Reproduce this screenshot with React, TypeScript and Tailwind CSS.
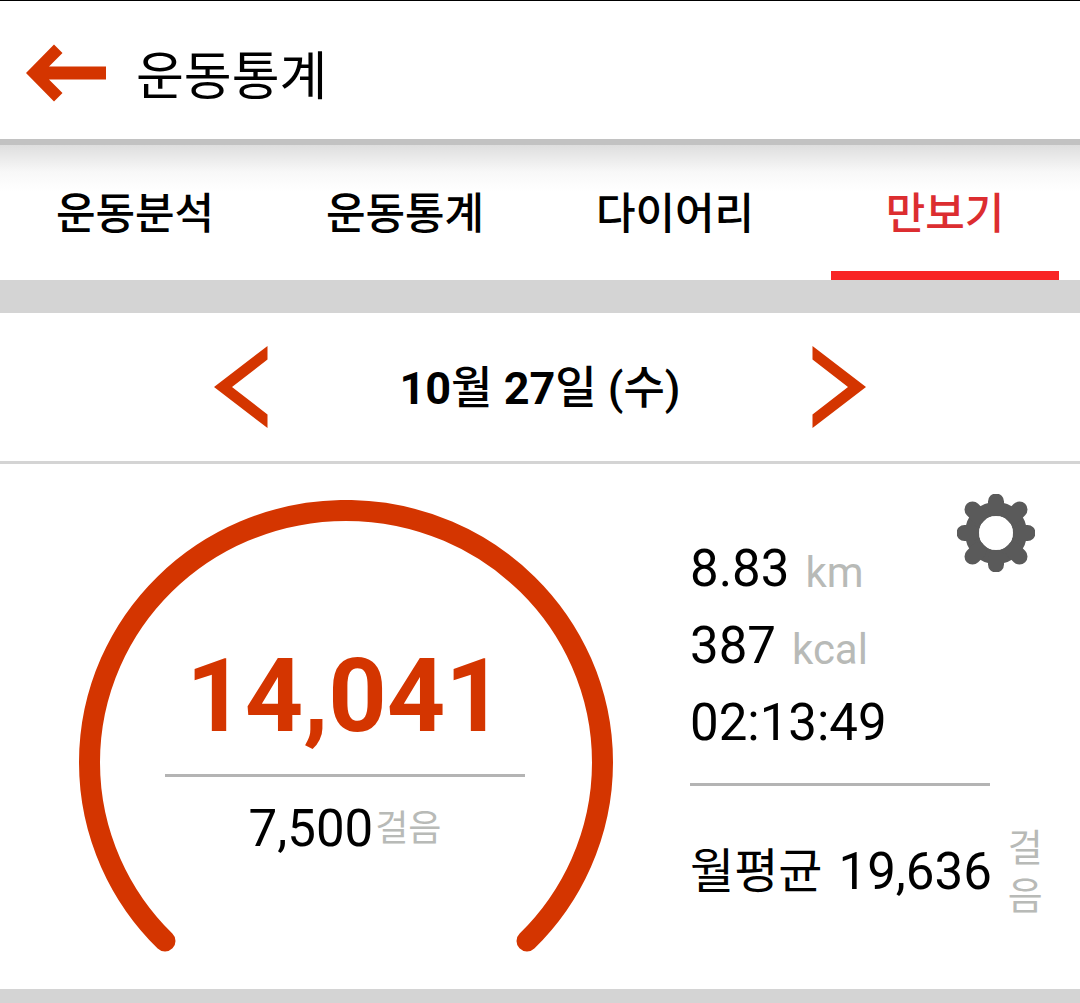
import { useState } from "react"

const TABS = ["운동분석", "운동통계", "다이어리", "만보기"]

const METRICS = [
  { value: "8.83", unit: "km" },
  { value: "387", unit: "kcal" },
  { value: "02:13:49", unit: "" },
]

function BackArrow() {
  return (
    <svg viewBox="0 0 80 58" className="w-20 h-[58px]" fill="#d43500" aria-hidden="true">
      <path d="M0 29 28 0.5 36.5 9 23 22.5H80V35.5H23L36.5 49 28 57.5Z" />
    </svg>
  )
}

function Chevron({ flip = false }: { flip?: boolean }) {
  return (
    <svg
      viewBox="0 0 54 82"
      className={flip ? "w-[54px] h-[82px] -scale-x-100" : "w-[54px] h-[82px]"}
      fill="#d43500"
      aria-hidden="true"
    >
      <path d="M0 41 53.5 0V13.5L18 41 53.5 68.5V82Z" />
    </svg>
  )
}

function GearIcon() {
  return (
    <svg viewBox="0 0 78 78" className="w-[78px] h-[78px]" stroke="#5a5a5a" fill="none" aria-hidden="true">
      <circle cx="39" cy="39" r="24" strokeWidth="14" />
      <g strokeWidth="16" strokeLinecap="round">
        <path d="M39 15V7.5M39 63V70.5M15 39H7.5M63 39H70.5" />
        <path d="M22 22 15.5 15.5M56 22 62.5 15.5M22 56 15.5 62.5M56 56 62.5 62.5" />
      </g>
      <circle cx="39" cy="39" r="17" fill="#fff" stroke="none" />
    </svg>
  )
}

function StepDial({ steps, goal }: { steps: string; goal: string }) {
  return (
    <div className="grid justify-items-center">
      <svg viewBox="0 0 536 453" className="col-start-1 row-start-1 w-[536px] h-[453px]" fill="none" aria-hidden="true">
        <path
          d="M88 441A256.5 252 0 1 1 450 441"
          stroke="#d43500"
          strokeWidth="21"
          strokeLinecap="round"
        />
      </svg>
      <div className="col-start-1 row-start-1 w-[360px] pt-[136px] text-center">
        <div className="text-[102px] leading-[120px] font-bold text-[#d43500]">{steps}</div>
        <hr className="mt-[18px] border-0 h-[3px] bg-[#b4b4b4]" />
        <div className="mt-5 flex justify-center items-center gap-0.5 leading-[64px]">
          <span className="text-[51px]">{goal}</span>
          <span className="text-4xl leading-[64px] text-[#b8bab7]">걸음</span>
        </div>
      </div>
    </div>
  )
}

export default function App() {
  const [tab, setTab] = useState("만보기")

  return (
    <div className="min-h-screen flex flex-col bg-[#d4d4d4] text-black font-[Roboto,'Noto_Sans_CJK_KR',sans-serif]">
      <header className="flex items-center gap-[30px] h-[139px] pl-[26px] pt-1.5 bg-white border-t border-black">
        <button type="button" aria-label="뒤로">
          <BackArrow />
        </button>
        <h1 className="pt-2.5 text-[52px] leading-[72px]">운동통계</h1>
      </header>

      <nav className="grid grid-cols-4 h-[141px] border-t-[6px] border-[#c2c2c2] bg-linear-to-b from-[#dedede] via-[#f8f8f8] via-20% to-white to-35%">
        {TABS.map((name) => (
          <button
            key={name}
            type="button"
            onClick={() => setTab(name)}
            className={
              name === tab
                ? "mx-[21px] pt-3 border-b-[9px] border-[#f82424] text-[43px] font-medium text-[#dc2d30]"
                : "mx-[21px] pt-3 border-b-[9px] border-transparent text-[43px] font-medium"
            }
          >
            {name}
          </button>
        ))}
      </nav>

      <main className="mt-[33px] bg-white">
        <div className="h-[151px] border-b-[3px] border-[#d4d4d4]">
          <div className="flex items-center justify-between h-full max-w-[652px] mx-auto">
            <button type="button" aria-label="이전 날">
              <Chevron />
            </button>
            <h2 className="pt-1 text-[45px] font-medium">
              <b>10</b>월 <b>27</b>일 (수)
            </h2>
            <button type="button" aria-label="다음 날">
              <Chevron flip />
            </button>
          </div>
        </div>

        <div className="grid grid-cols-[23fr_13fr] pb-9">
          <section className="pt-9">
            <StepDial steps="14,041" goal="7,500" />
          </section>

          <section className="pt-[30px] pr-8">
            <div className="flex justify-between items-start">
              <ul className="pt-9 leading-[77px]">
                {METRICS.map((m) => (
                  <li key={m.value} className="flex gap-4 h-[77px]">
                    <span className="text-[51px]">{m.value}</span>
                    {m.unit && <span className="pt-1 text-[42px] text-[#b8bab7]">{m.unit}</span>}
                  </li>
                ))}
              </ul>
              <button type="button" aria-label="설정" className="mr-[13px]">
                <GearIcon />
              </button>
            </div>
            <hr className="mt-[22px] w-[300px] border-0 h-[3px] bg-[#b4b4b4]" />
            <div className="mt-[38px] flex items-center gap-4 whitespace-nowrap">
              <span className="text-5xl">월평균</span>
              <span className="text-[51px]">19,636</span>
              <span className="w-9 text-[38px] leading-[48px] text-[#b8bab7] whitespace-normal break-all">걸음</span>
            </div>
          </section>
        </div>
      </main>
    </div>
  )
}
